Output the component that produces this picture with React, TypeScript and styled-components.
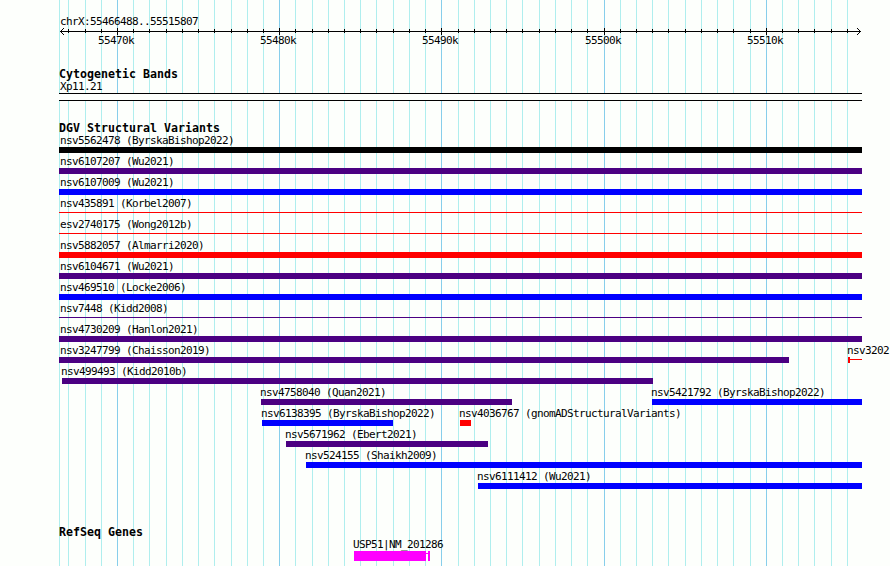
import styled, { createGlobalStyle } from "styled-components";

const PAGE_WIDTH = 890;
const PAGE_HEIGHT = 566;
const TRACK_LEFT = 59;
const TRACK_RIGHT = 862;
const MAJOR_TICKS = [117, 279, 441, 604, 766];
const MINOR_TICKS = [
    68, 85, 101, 133, 149, 166, 182, 198, 214, 231, 247, 263,
    295, 312, 328, 344, 360, 376, 393, 409, 425, 458, 474, 490,
    506, 522, 539, 555, 571, 587, 620, 636, 652, 668, 685, 701,
    717, 733, 750, 782, 798, 814, 831, 847,
];
const TICK_LABELS = ["55470k", "55480k", "55490k", "55500k", "55510k"];

const BLACK = "#000";
const INDIGO = "#4b0082";
const BLUE = "#00f";
const RED = "#f00";

interface IFeature {
    readonly name: string;
    readonly start: number;
    readonly end: number;
    readonly color: string;
    readonly shape?: "thin" | "clipped";
}

const variantRows: IFeature[][] = [
    [{ name: "nsv5562478 (ByrskaBishop2022)", start: 59, end: 862, color: BLACK }],
    [{ name: "nsv6107207 (Wu2021)", start: 59, end: 862, color: INDIGO }],
    [{ name: "nsv6107009 (Wu2021)", start: 59, end: 862, color: BLUE }],
    [{ name: "nsv435891 (Korbel2007)", start: 59, end: 862, color: RED, shape: "thin" }],
    [{ name: "esv2740175 (Wong2012b)", start: 59, end: 862, color: RED, shape: "thin" }],
    [{ name: "nsv5882057 (Almarri2020)", start: 59, end: 862, color: RED }],
    [{ name: "nsv6104671 (Wu2021)", start: 59, end: 862, color: INDIGO }],
    [{ name: "nsv469510 (Locke2006)", start: 59, end: 862, color: BLUE }],
    [{ name: "nsv7448 (Kidd2008)", start: 59, end: 862, color: INDIGO, shape: "thin" }],
    [{ name: "nsv4730209 (Hanlon2021)", start: 59, end: 862, color: INDIGO }],
    [
        { name: "nsv3247799 (Chaisson2019)", start: 59, end: 789, color: INDIGO },
        { name: "nsv3202", start: 848, end: 862, color: RED, shape: "clipped" },
    ],
    [{ name: "nsv499493 (Kidd2010b)", start: 62, end: 653, color: INDIGO }],
    [
        { name: "nsv4758040 (Quan2021)", start: 261, end: 512, color: INDIGO },
        { name: "nsv5421792 (ByrskaBishop2022)", start: 652, end: 862, color: BLUE },
    ],
    [
        { name: "nsv6138395 (ByrskaBishop2022)", start: 262, end: 393, color: BLUE },
        { name: "nsv4036767 (gnomADStructuralVariants)", start: 460, end: 471, color: RED },
    ],
    [{ name: "nsv5671962 (Ebert2021)", start: 286, end: 488, color: INDIGO }],
    [{ name: "nsv524155 (Shaikh2009)", start: 306, end: 862, color: BLUE }],
    [{ name: "nsv6111412 (Wu2021)", start: 478, end: 862, color: BLUE }],
];

const GlobalStyle = createGlobalStyle`
body{
    margin:0;
    background:#fdfffc;
}
`

const BrowserDiv = styled.div`
position:relative;
width:${PAGE_WIDTH}px;
height:${PAGE_HEIGHT}px;
overflow:hidden;
color:#000;
font:11px/15px "DejaVu Sans Mono", monospace;
letter-spacing:-0.622px;
white-space:pre;
`

const GridSvg = styled.svg`
position:absolute;
inset:0;
z-index:-1;
`

const RulerSvg = styled.svg`
display:block;
`

const TracksDiv = styled.div`
display:flex;
flex-direction:column;
padding-left:${TRACK_LEFT}px;
width:${TRACK_RIGHT - TRACK_LEFT}px;
`

const TrackSection = styled.section<{ $gap: number }>`
padding-top:${props => props.$gap}px;
`

const TrackTitle = styled.h2`
margin:0;
height:12px;
font-size:11.6px;
font-weight:bold;
line-height:16px;
letter-spacing:0.017px;
`

const BandDiv = styled.div`
box-sizing:border-box;
height:8px;
border:solid #000;
border-width:1px 0;
background:#fdfffc;
`

const RowDiv = styled.div`
display:flex;
height:21px;
`

const FeatureDiv = styled.div<{ $gap: number; $width: number }>`
flex:none;
margin-left:${props => props.$gap}px;
width:${props => props.$width}px;
`

const NameDiv = styled.div<{ $indent?: number }>`
height:15px;
text-indent:${props => props.$indent ?? 0}px;
line-height:17px;
`

const BarDiv = styled.div<{ $color: string; $shape?: "thin" | "clipped" }>`
box-sizing:border-box;
height:${props => props.$shape === "thin" ? 1 : 6}px;
margin-top:${props => props.$shape === "thin" ? 2 : 0}px;
background:${props => props.$shape === "clipped"
        ? `linear-gradient(${props.$color}, ${props.$color}) 0 0 / 2px 6px no-repeat,
           linear-gradient(${props.$color}, ${props.$color}) 0 2px / 100% 1px no-repeat`
        : props.$color};
`

const GridLines = () => (
    <GridSvg width={PAGE_WIDTH} height={PAGE_HEIGHT} shapeRendering="crispEdges">
        {[TRACK_LEFT, ...MINOR_TICKS].map(x => (
            <rect key={x} x={x} y={0} width={1} height={PAGE_HEIGHT} fill="#afeeee" />
        ))}
        {MAJOR_TICKS.map(x => (
            <rect key={x} x={x} y={0} width={1} height={PAGE_HEIGHT} fill="#87ceeb" />
        ))}
    </GridSvg>
)

const Ruler = () => (
    <RulerSvg width={PAGE_WIDTH} height={66}>
        <text x={60} y={25}>chrX:55466488..55515807</text>
        <g shapeRendering="crispEdges">
            <rect x={60} y={31} width={801} height={1} />
            {MINOR_TICKS.map(x => <rect key={x} x={x} y={29} width={1} height={4} />)}
            {MAJOR_TICKS.map(x => <rect key={x} x={x} y={28} width={1} height={7} />)}
            {[1, 2, 3].map(d => (
                <g key={d}>
                    <rect x={60 + d} y={31 - d} width={1} height={1} />
                    <rect x={60 + d} y={31 + d} width={1} height={1} />
                    <rect x={860 - d} y={31 - d} width={1} height={1} />
                    <rect x={860 - d} y={31 + d} width={1} height={1} />
                </g>
            ))}
        </g>
        {MAJOR_TICKS.map((x, i) => (
            <text key={x} x={x - 19} y={44}>{TICK_LABELS[i]}</text>
        ))}
    </RulerSvg>
)

const FeatureRow = ({ features }: { features: IFeature[] }) => (
    <RowDiv>
        {features.map((feature, i) => (
            <FeatureDiv
                key={feature.name}
                $gap={feature.start - (i > 0 ? features[i - 1].end : TRACK_LEFT)}
                $width={feature.end - feature.start}
            >
                <NameDiv $indent={feature.start === TRACK_LEFT ? 1 : -1}>{feature.name}</NameDiv>
                <BarDiv $color={feature.color} $shape={feature.shape} />
            </FeatureDiv>
        ))}
    </RowDiv>
)

const App = () => (
    <BrowserDiv>
        <GlobalStyle />
        <GridLines />
        <Ruler />
        <TracksDiv>
            <TrackSection $gap={0}>
                <TrackTitle>Cytogenetic Bands</TrackTitle>
                <NameDiv $indent={1}>Xp11.21</NameDiv>
                <BandDiv />
            </TrackSection>
            <TrackSection $gap={19}>
                <TrackTitle>DGV Structural Variants</TrackTitle>
                {variantRows.map(row => <FeatureRow key={row[0].name} features={row} />)}
            </TrackSection>
            <TrackSection $gap={35}>
                <TrackTitle>RefSeq Genes</TrackTitle>
                <RowDiv>
                    <FeatureDiv $gap={294} $width={77}>
                        <NameDiv>USP51|NM_201286</NameDiv>
                        <svg width={77} height={10} fill="#f0f" shapeRendering="crispEdges" display="block">
                            <rect x={1} y={0} width={72} height={10} />
                            <rect x={73} y={2} width={2} height={1} />
                            <rect x={75} y={0} width={2} height={10} />
                        </svg>
                    </FeatureDiv>
                </RowDiv>
            </TrackSection>
        </TracksDiv>
    </BrowserDiv>
)

export default App;
